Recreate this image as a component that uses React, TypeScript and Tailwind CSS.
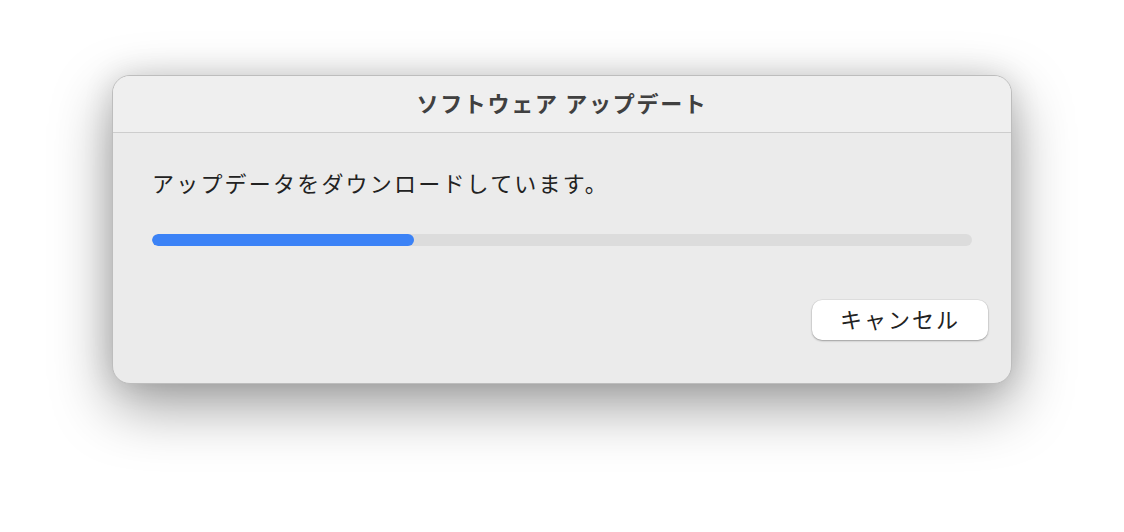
import React from "react";

export default function App() {
  const progress = 32;
  return (
    <div
      className="w-[1124px] h-[532px] bg-white flex justify-center pt-[75px]"
      style={{ fontFamily: '"Noto Sans CJK JP", "Noto Sans", sans-serif' }}
    >
      <div className="w-[900px] h-[309px] rounded-[18px] border border-[#bdbdbd] bg-[#ebebeb] overflow-hidden flex flex-col shadow-[0_22px_60px_rgba(0,0,0,0.38),0_0_30px_rgba(0,0,0,0.12)]">
        <div className="h-[57px] shrink-0 bg-[#efefef] border-b border-[#cdcdcd] flex items-center justify-center pb-[4px]">
          <span className="text-[22px] font-bold text-[#404040] tracking-[1.7px]">
            ソフトウェア アップデート
          </span>
        </div>
        <div className="flex-1 flex flex-col pl-[39px] pr-[23px]">
          <div className="mt-[34px] text-[22px] leading-[30px] text-[#222] tracking-[2.2px]">
            アップデータをダウンロードしています。
          </div>
          <div className="mt-[37px] mr-[16px] h-[12px] rounded-full bg-[#dcdcdc] overflow-hidden">
            <div className="h-full rounded-full bg-[#3b82f6]" style={{ width: `${progress}%` }} />
          </div>
          <div className="mt-[54px] flex justify-end">
            <button className="w-[176px] h-[40px] rounded-[10px] bg-white text-[22px] text-[#222] tracking-[2px] pb-[4px] shadow-[0_1px_2px_rgba(0,0,0,0.3),0_0_0_0.5px_rgba(0,0,0,0.08)] flex items-center justify-center">
              キャンセル
            </button>
          </div>
        </div>
      </div>
    </div>
  );
}
